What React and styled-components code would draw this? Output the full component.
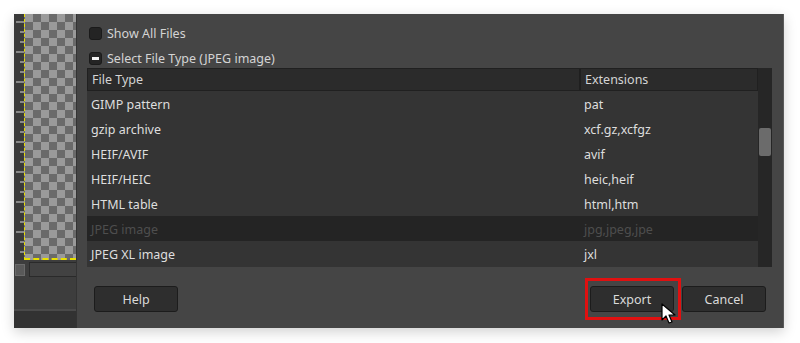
import React from "react";
import styled, { createGlobalStyle } from "styled-components";

const ROWS = [
  { type: "GIMP pattern", ext: "pat" },
  { type: "gzip archive", ext: "xcf.gz,xcfgz" },
  { type: "HEIF/AVIF", ext: "avif" },
  { type: "HEIF/HEIC", ext: "heic,heif" },
  { type: "HTML table", ext: "html,htm" },
  { type: "JPEG image", ext: "jpg,jpeg,jpe", selected: true },
  { type: "JPEG XL image", ext: "jxl" },
];

const GlobalStyle = createGlobalStyle`
  body {
    margin: 0;
    background: #ffffff;
    font-family: "Noto Sans", "Open Sans", sans-serif;
  }
`;

export default function App() {
  return (
    <>
      <GlobalStyle />
      <Page>
        <Frame>
          <LeftPanel>
            <CanvasArea>
              <Ruler>
                <svg width="10" height="246" viewBox="0 0 10 246">
                  {Array.from({ length: 25 }).map((_, i) => (
                    <line
                      key={i}
                      x1={i % 3 === 0 ? 2 : 6}
                      y1={8 + i * 10}
                      x2="10"
                      y2={8 + i * 10}
                      stroke="#d8d8d8"
                      strokeWidth="1"
                    />
                  ))}
                </svg>
              </Ruler>
              <Checker />
            </CanvasArea>
            <ScrollRow>
              <ScrollCorner />
              <HScroll />
            </ScrollRow>
            <LeftFill />
            <LeftFooter />
          </LeftPanel>

          <Dialog>
            <Options>
              <CheckRow>
                <CheckBox />
                <CheckLabel>Show All Files</CheckLabel>
              </CheckRow>
              <CheckRow>
                <CheckBox $mixed />
                <CheckLabel>Select File Type (JPEG image)</CheckLabel>
              </CheckRow>
            </Options>

            <TableWrap>
              <Table>
                <HeaderRow>
                  <HeaderCell $first>File Type</HeaderCell>
                  <HeaderCell>Extensions</HeaderCell>
                </HeaderRow>
                {ROWS.map((row) => (
                  <Row key={row.type} $selected={row.selected}>
                    <Cell>{row.type}</Cell>
                    <Cell>{row.ext}</Cell>
                  </Row>
                ))}
              </Table>
              <VScroll>
                <Thumb />
              </VScroll>
            </TableWrap>

            <ButtonBar>
              <Button>Help</Button>
              <Spacer />
              <Highlighted>
                <Button>Export</Button>
                <Cursor width="16" height="22" viewBox="0 0 16 22">
                  <path
                    d="M1 1 L1 17 L5 13 L8 20 L11 19 L8 12 L14 12 Z"
                    fill="#ffffff"
                    stroke="#000000"
                    strokeWidth="1.2"
                    strokeLinejoin="round"
                  />
                </Cursor>
              </Highlighted>
              <Button>Cancel</Button>
            </ButtonBar>
          </Dialog>
        </Frame>
      </Page>
    </>
  );
}

const Page = styled.div`
  padding: 14px 16px 15px 14px;
`;

const Frame = styled.div`
  display: flex;
  height: 314px;
  background: #3c3c3c;
  box-shadow: 0 4px 12px rgba(0, 0, 0, 0.18);
`;

const LeftPanel = styled.div`
  width: 62px;
  display: flex;
  flex-direction: column;
  background: #3d3d3d;
  border-right: 1px solid #333333;
`;

const CanvasArea = styled.div`
  display: flex;
  height: 246px;
`;

const Ruler = styled.div`
  width: 10px;
  background: #3a3a3a;
  display: flex;
`;

const Checker = styled.div`
  flex: 1;
  border-left: 1px dashed #e8e000;
  border-bottom: 2px dashed #e8e000;
  background-color: #9a9a9a;
  background-image: linear-gradient(45deg, #6a6a6a 25%, transparent 25%),
    linear-gradient(-45deg, #6a6a6a 25%, transparent 25%),
    linear-gradient(45deg, transparent 75%, #6a6a6a 75%),
    linear-gradient(-45deg, transparent 75%, #6a6a6a 75%);
  background-size: 16px 16px;
  background-position: 0 0, 0 8px, 8px -8px, -8px 0;
`;

const ScrollRow = styled.div`
  display: flex;
  align-items: center;
  gap: 4px;
  margin-top: 2px;
  height: 15px;
`;

const ScrollCorner = styled.div`
  width: 8px;
  height: 10px;
  margin-left: 1px;
  background: #595959;
  border: 1px solid #6a6a6a;
`;

const HScroll = styled.div`
  flex: 1;
  height: 13px;
  background: #424242;
  border: 1px solid #2a2a2a;
  border-right: none;
`;

const LeftFill = styled.div`
  flex: 1;
  border-bottom: 2px solid #4a4a4a;
`;

const LeftFooter = styled.div`
  height: 17px;
  background: #323232;
`;

const Dialog = styled.div`
  flex: 1;
  display: flex;
  flex-direction: column;
  background: #454545;
  padding: 9px 11px 0 10px;
  border-right: 1px solid #5a5a5a;
`;

const Options = styled.div`
  display: flex;
  flex-direction: column;
  gap: 5px;
`;

const CheckRow = styled.div`
  display: flex;
  align-items: center;
  gap: 5px;
  height: 20px;
  padding-left: 2px;
`;

const CheckBox = styled.span`
  position: relative;
  width: 13px;
  height: 13px;
  border-radius: 3px;
  background: #242424;
  border: 1px solid #1a1a1a;
  box-sizing: border-box;

  &::after {
    content: "";
    display: ${(p) => (p.$mixed ? "block" : "none")};
    position: absolute;
    left: 2px;
    right: 2px;
    top: 4px;
    height: 3px;
    background: #f2f2f2;
  }
`;

const CheckLabel = styled.span`
  color: #d4d4d4;
  font-size: 12.5px;
`;

const TableWrap = styled.div`
  display: flex;
  height: 199px;
`;

const Table = styled.div`
  flex: 1;
  background: #343434;
  overflow: hidden;
`;

const HeaderRow = styled.div`
  display: grid;
  grid-template-columns: 493px 1fr;
  height: 23px;
  background: #2b2b2b;
  border: 1px solid #202020;
  box-sizing: border-box;
`;

const HeaderCell = styled.div`
  display: flex;
  align-items: center;
  padding-left: 4px;
  color: #d4d4d4;
  font-size: 12.5px;
  border-right: ${(p) => (p.$first ? "2px solid #1f1f1f" : "none")};
`;

const Row = styled.div`
  display: grid;
  grid-template-columns: 493px 1fr;
  height: 25px;
  padding-top: 1px;
  box-sizing: border-box;
  background: ${(p) => (p.$selected ? "#242424" : "#343434")};
  color: ${(p) => (p.$selected ? "#4e4e4e" : "#dedede")};
`;

const Cell = styled.div`
  display: flex;
  align-items: center;
  padding-left: 4px;
  font-size: 12.5px;
`;

const VScroll = styled.div`
  width: 14px;
  background: #262626;
  padding-top: 60px;
  box-sizing: border-box;
  display: flex;
  justify-content: center;
`;

const Thumb = styled.div`
  width: 12px;
  height: 28px;
  border-radius: 2px;
  background: #6b6b6b;
`;

const ButtonBar = styled.div`
  display: flex;
  align-items: center;
  gap: 8px;
  margin-top: 19px;
  padding: 0 6px 0 7px;
`;

const Spacer = styled.div`
  flex: 1;
`;

const Button = styled.button`
  width: 84px;
  height: 26px;
  background: #2e2e2e;
  border: 1px solid #1c1c1c;
  border-radius: 3px;
  color: #dadada;
  font-family: "Noto Sans", "Open Sans", sans-serif;
  font-size: 12.5px;
  padding: 0;
`;

const Highlighted = styled.div`
  position: relative;
  display: flex;

  &::before {
    content: "";
    position: absolute;
    left: -5px;
    right: -7px;
    top: -8px;
    bottom: -8px;
    border: 3px solid #e01010;
    pointer-events: none;
  }
`;

const Cursor = styled.svg`
  position: absolute;
  left: 71px;
  top: 17px;
`;
